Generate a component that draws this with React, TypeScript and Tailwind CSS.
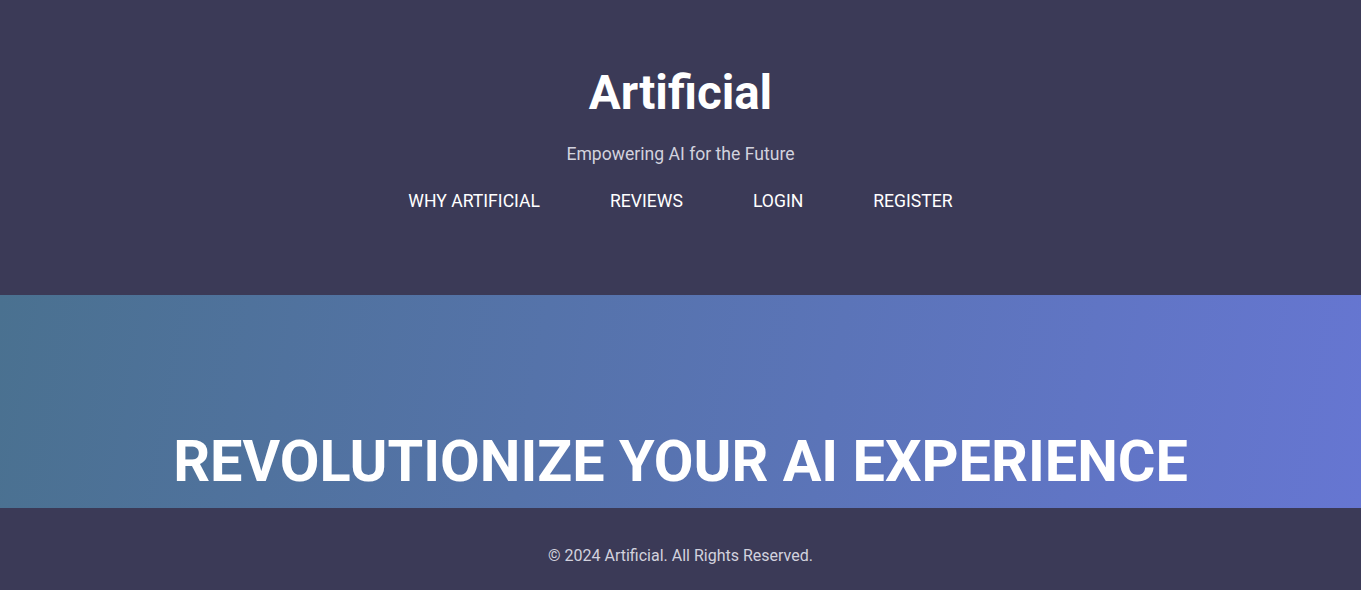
import React from 'react';

const navItems = ['WHY ARTIFICIAL', 'REVIEWS', 'LOGIN', 'REGISTER'];

const App = () => {
  return (
    <div className="min-h-screen bg-[#3b3a57] font-['Roboto',sans-serif]">
      {/* Header */}
      <header className="h-[295px] bg-[#3b3a57] text-white text-center pt-[62px]">
        <h1 className="text-[47.5px] leading-[62px] font-bold">Artificial</h1>
        <p className="mt-[18px] text-[17.6px] leading-[24px] text-[#d2d2de]">
          Empowering AI for the Future
        </p>
        <nav className="mt-[23px] flex justify-center gap-[70px]">
          {navItems.map((item) => (
            <a key={item} href="#" className="text-[17.6px] leading-[24px] text-white">
              {item}
            </a>
          ))}
        </nav>
      </header>

      {/* Hero */}
      <section className="h-[213px] bg-[linear-gradient(100deg,#4a7190,#6676d2)] flex flex-col justify-end pb-[10px]">
        <h2 className="text-center text-white text-[57.6px] leading-[72px] font-bold">
          REVOLUTIONIZE YOUR AI EXPERIENCE
        </h2>
      </section>

      {/* Footer */}
      <footer className="bg-[#3b3a57] text-center pt-[36px] pb-[36px]">
        <p className="text-[16px] leading-[24px] text-[#d2d2de]">
          © 2024 Artificial. All Rights Reserved.
        </p>
      </footer>
    </div>
  );
};

export default App;
